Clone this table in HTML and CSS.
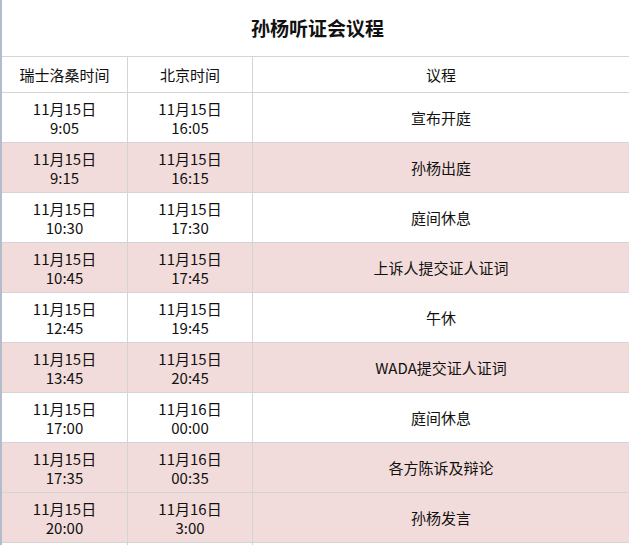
FILE: index.html
```html
<!DOCTYPE html>
<html lang="zh-CN">
<head>
<meta charset="utf-8">
<title>孙杨听证会议程</title>
<link rel="stylesheet" href="styles.css">
</head>
<body>
<div class="sheet">
  <div class="title">孙杨听证会议程</div>
  <div class="row head">
    <div class="cell">瑞士洛桑时间</div>
    <div class="cell">北京时间</div>
    <div class="cell">议程</div>
  </div>
  <div class="row">
    <div class="cell"><span>11月15日</span><span>9:05</span></div>
    <div class="cell"><span>11月15日</span><span>16:05</span></div>
    <div class="cell">宣布开庭</div>
  </div>
  <div class="row pink">
    <div class="cell"><span>11月15日</span><span>9:15</span></div>
    <div class="cell"><span>11月15日</span><span>16:15</span></div>
    <div class="cell">孙杨出庭</div>
  </div>
  <div class="row">
    <div class="cell"><span>11月15日</span><span>10:30</span></div>
    <div class="cell"><span>11月15日</span><span>17:30</span></div>
    <div class="cell">庭间休息</div>
  </div>
  <div class="row pink">
    <div class="cell"><span>11月15日</span><span>10:45</span></div>
    <div class="cell"><span>11月15日</span><span>17:45</span></div>
    <div class="cell">上诉人提交证人证词</div>
  </div>
  <div class="row">
    <div class="cell"><span>11月15日</span><span>12:45</span></div>
    <div class="cell"><span>11月15日</span><span>19:45</span></div>
    <div class="cell">午休</div>
  </div>
  <div class="row pink">
    <div class="cell"><span>11月15日</span><span>13:45</span></div>
    <div class="cell"><span>11月15日</span><span>20:45</span></div>
    <div class="cell">WADA提交证人证词</div>
  </div>
  <div class="row">
    <div class="cell"><span>11月15日</span><span>17:00</span></div>
    <div class="cell"><span>11月16日</span><span>00:00</span></div>
    <div class="cell">庭间休息</div>
  </div>
  <div class="row pink">
    <div class="cell"><span>11月15日</span><span>17:35</span></div>
    <div class="cell"><span>11月16日</span><span>00:35</span></div>
    <div class="cell">各方陈诉及辩论</div>
  </div>
  <div class="row pink">
    <div class="cell"><span>11月15日</span><span>20:00</span></div>
    <div class="cell"><span>11月16日</span><span>3:00</span></div>
    <div class="cell">孙杨发言</div>
  </div>
  <div class="row tail">
    <div class="cell"></div>
    <div class="cell"></div>
    <div class="cell"></div>
  </div>
</div>
</body>
</html>
```

FILE: styles.css
```css
* {
  box-sizing: border-box;
}

html, body {
  margin: 0;
  padding: 0;
  background: #ffffff;
}

body {
  font-family: "Noto Sans CJK SC", "Liberation Sans", sans-serif;
  font-size: 15px;
  color: #111111;
  overflow: hidden;
}

.sheet {
  width: 629px;
  border-left: 2px solid #b3bccb;
}

.title {
  height: 57px;
  border-bottom: 1px solid #d4d4d4;
  display: flex;
  align-items: center;
  justify-content: center;
  font-size: 19px;
  font-weight: bold;
  padding-left: 4px;
  padding-bottom: 1px;
}

.row {
  display: grid;
  grid-template-columns: 126px 125px 1fr;
  height: 50px;
}

.row.head {
  height: 36px;
}

.row.tail {
  height: 3px;
}

.row.pink {
  background: #f2dcdb;
}

.cell {
  border-right: 1px solid #d4d4d4;
  border-bottom: 1px solid #d4d4d4;
  display: flex;
  flex-direction: column;
  align-items: center;
  justify-content: center;
  line-height: 19px;
}

.row.tail .cell {
  border-bottom: none;
}

.cell:last-child {
  border-right: none;
}
```
